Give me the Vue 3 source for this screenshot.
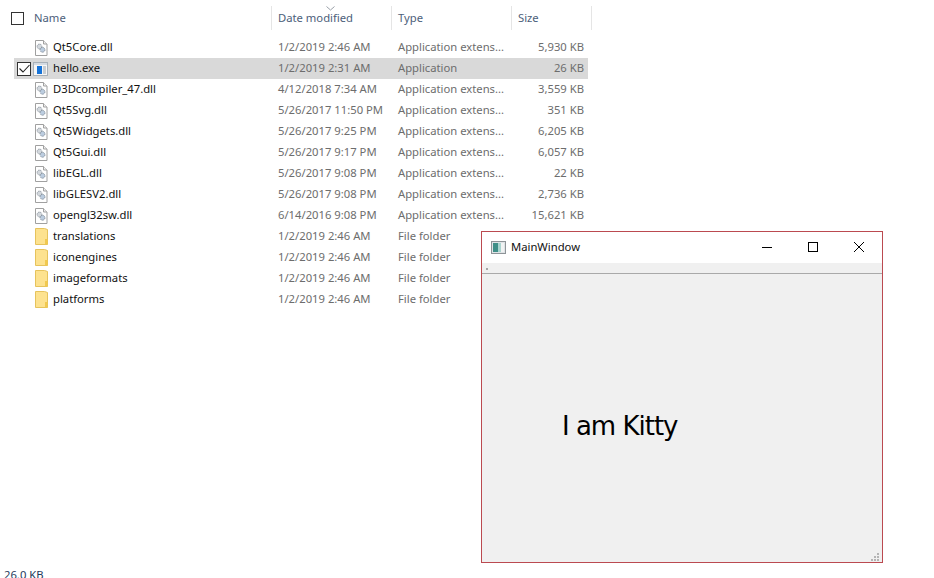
<script setup>
const files = [
  { name: 'Qt5Core.dll', date: '1/2/2019 2:46 AM', type: 'Application extens...', size: '5,930 KB', kind: 'dll' },
  { name: 'hello.exe', date: '1/2/2019 2:31 AM', type: 'Application', size: '26 KB', kind: 'exe', selected: true },
  { name: 'D3Dcompiler_47.dll', date: '4/12/2018 7:34 AM', type: 'Application extens...', size: '3,559 KB', kind: 'dll' },
  { name: 'Qt5Svg.dll', date: '5/26/2017 11:50 PM', type: 'Application extens...', size: '351 KB', kind: 'dll' },
  { name: 'Qt5Widgets.dll', date: '5/26/2017 9:25 PM', type: 'Application extens...', size: '6,205 KB', kind: 'dll' },
  { name: 'Qt5Gui.dll', date: '5/26/2017 9:17 PM', type: 'Application extens...', size: '6,057 KB', kind: 'dll' },
  { name: 'libEGL.dll', date: '5/26/2017 9:08 PM', type: 'Application extens...', size: '22 KB', kind: 'dll' },
  { name: 'libGLESV2.dll', date: '5/26/2017 9:08 PM', type: 'Application extens...', size: '2,736 KB', kind: 'dll' },
  { name: 'opengl32sw.dll', date: '6/14/2016 9:08 PM', type: 'Application extens...', size: '15,621 KB', kind: 'dll' },
  { name: 'translations', date: '1/2/2019 2:46 AM', type: 'File folder', size: '', kind: 'folder' },
  { name: 'iconengines', date: '1/2/2019 2:46 AM', type: 'File folder', size: '', kind: 'folder' },
  { name: 'imageformats', date: '1/2/2019 2:46 AM', type: 'File folder', size: '', kind: 'folder' },
  { name: 'platforms', date: '1/2/2019 2:46 AM', type: 'File folder', size: '', kind: 'folder' },
]
</script>

<template>
  <div class="screen">
    <main class="explorer">
      <header class="head">
        <div class="head-name">
          <span class="box"></span>
          <span class="head-label">Name</span>
        </div>
        <div class="head-cell date-head">
          <svg class="sort" width="9" height="5" viewBox="0 0 9 5"><path d="M.5.5 4.5 4 8.5.5" fill="none" stroke="#9aa0a8" /></svg>
          <span class="head-label">Date modified</span>
        </div>
        <div class="head-cell"><span class="head-label">Type</span></div>
        <div class="head-cell"><span class="head-label">Size</span></div>
      </header>

      <section class="list">
        <div v-for="f in files" :key="f.name" class="row" :class="{ selected: f.selected }">
          <div class="name-cell">
            <span class="slot">
              <span v-if="f.selected" class="box row-box">
                <svg width="11" height="9" viewBox="0 0 11 9"><path d="M.5 4.5 4 8 10.5 1" fill="none" stroke="#222" stroke-width="1.1" /></svg>
              </span>
            </span>
            <svg v-if="f.kind === 'dll'" class="icon" width="14" height="16" viewBox="0 0 14 16">
              <path d="M.5.5h8l3.5 3.5v11.5H.5z" fill="#fff" stroke="#a0a0a0" />
              <path d="M8.5.5v3.5h3.5" fill="#eee" stroke="#a0a0a0" />
              <circle cx="4.5" cy="6.5" r="2.4" fill="#d3d8dd" stroke="#8f98a2" stroke-dasharray="1.4 .8" />
              <circle cx="7.5" cy="9.8" r="2.4" fill="#bccde0" stroke="#7f8b98" stroke-dasharray="1.4 .8" />
            </svg>
            <svg v-else-if="f.kind === 'exe'" class="icon" width="15" height="14" viewBox="0 0 15 14">
              <rect x=".5" y=".5" width="14" height="13" fill="#f6f6f6" stroke="#a8b0b8" />
              <rect x="1" y="1" width="13" height="2" fill="#d5dbe2" />
              <rect x="4" y="4" width="5" height="8" fill="#1673d8" />
              <path d="M10 5h3M10 7h3M10 9h3M10 11h3" stroke="#9aa4ae" />
            </svg>
            <svg v-else class="icon folder" width="14" height="17" viewBox="0 0 14 17">
              <path d="M.5.5h9l3 1v15H.5z" fill="#fde28f" stroke="#e6c35c" />
              <path d="M10 11h2.5v5.5H10z" fill="#f1c94f" />
            </svg>
            <span class="file-name">{{ f.name }}</span>
          </div>
          <div class="cell">{{ f.date }}</div>
          <div class="cell">{{ f.type }}</div>
          <div class="cell size">{{ f.size }}</div>
        </div>
      </section>
    </main>

    <footer class="status">26.0 KB</footer>

    <div class="window">
      <div class="titlebar">
        <svg class="app-icon" width="15" height="13" viewBox="0 0 15 13">
          <rect x=".5" y=".5" width="14" height="12" fill="#dfe3e6" stroke="#8e9498" />
          <rect x="2" y="2" width="5" height="9" fill="#3f8f88" />
          <rect x="7" y="2" width="3" height="9" fill="#a9d4cf" />
          <rect x="10" y="2" width="3" height="9" fill="#f1f3f3" />
        </svg>
        <span class="title">MainWindow</span>
        <div class="controls">
          <svg width="46" height="30" viewBox="0 0 46 30"><path d="M18 15.5h10" stroke="#000" /></svg>
          <svg width="46" height="30" viewBox="0 0 46 30"><rect x="18.5" y="10.5" width="9" height="9" fill="none" stroke="#000" /></svg>
          <svg width="46" height="30" viewBox="0 0 46 30"><path d="M18 10l10 10M28 10 18 20" fill="none" stroke="#000" /></svg>
        </div>
      </div>
      <div class="menubar"><span class="dot"></span></div>
      <div class="client">
        <p class="kitty">I am Kitty</p>
        <svg class="grip" width="9" height="9" viewBox="0 0 9 9" fill="#b4b4b4">
          <rect x="6" y="0" width="2" height="2" />
          <rect x="3" y="3" width="2" height="2" />
          <rect x="6" y="3" width="2" height="2" />
          <rect x="0" y="6" width="2" height="2" />
          <rect x="3" y="6" width="2" height="2" />
          <rect x="6" y="6" width="2" height="2" />
        </svg>
      </div>
    </div>
  </div>
</template>

<style scoped>
.screen {
  position: relative;
  width: 934px;
  height: 578px;
  overflow: hidden;
  background: #fff;
  display: flex;
  flex-direction: column;
  font-family: "Noto Sans", "Open Sans", sans-serif;
  font-size: 11.25px;
}
.explorer {
  flex: 1;
  min-height: 0;
}
.head {
  display: grid;
  grid-template-columns: 272px 120px 120px 80px;
  width: 592px;
  height: 24px;
  margin-top: 6px;
  margin-bottom: 7px;
  color: #4c607a;
}
.head-name {
  display: flex;
  align-items: center;
  padding-left: 11px;
  gap: 10px;
  border-right: 1px solid #e5e5e5;
  height: 24px;
}
.head-cell {
  position: relative;
  display: flex;
  align-items: center;
  padding-left: 6px;
  border-right: 1px solid #e5e5e5;
  height: 24px;
}
.head-label {
  padding-bottom: 2px;
}
.sort {
  position: absolute;
  left: 54px;
  top: 0;
}
.box {
  display: inline-flex;
  align-items: center;
  justify-content: center;
  width: 13px;
  height: 13px;
  border: 1px solid #333;
  box-sizing: border-box;
  background: #fff;
}
.list {
  margin-left: 14px;
  width: 574px;
}
.row {
  display: grid;
  grid-template-columns: 257px 120px 120px 77px;
  height: 21px;
  align-items: center;
  color: #6d6d6d;
}
.selected {
  background: #d9d9d9;
}
.name-cell {
  display: flex;
  align-items: center;
  color: #111;
  height: 21px;
}
.slot {
  width: 19px;
  flex: none;
  display: flex;
  justify-content: flex-end;
}
.row-box {
  width: 14px;
  height: 14px;
  margin-right: 2px;
}
.icon {
  flex: none;
  margin-left: 2px;
}
.selected .icon {
  margin-left: 0;
}
.file-name {
  margin-left: 4px;
  padding-bottom: 2px;
  white-space: nowrap;
}
.selected .file-name {
  margin-left: 5px;
}
.cell {
  padding-left: 7px;
  padding-bottom: 2px;
  white-space: nowrap;
}
.size {
  padding: 0 4px 2px 0;
  text-align: right;
}
.status {
  height: 11px;
  padding-left: 4px;
  line-height: 15px;
  color: #1e395b;
  flex: none;
}
.window {
  position: absolute;
  left: 481px;
  top: 231px;
  width: 402px;
  height: 332px;
  box-sizing: border-box;
  border: 1px solid #bb4a50;
  background: #f0f0f0;
  display: flex;
  flex-direction: column;
}
.titlebar {
  flex: none;
  height: 31px;
  background: #fff;
  display: flex;
  align-items: center;
  padding-left: 9px;
  padding-bottom: 1px;
  box-sizing: border-box;
  color: #111;
}
.app-icon {
  flex: none;
}
.title {
  margin-left: 5px;
  padding-bottom: 2px;
}
.controls {
  margin-left: auto;
  display: flex;
}
.menubar {
  flex: none;
  height: 10px;
  border-bottom: 1px solid #a9a9a9;
  position: relative;
}
.dot {
  position: absolute;
  left: 4px;
  top: 5px;
  width: 2px;
  height: 2px;
  background: #a5a5a5;
}
.client {
  flex: 1;
  position: relative;
}
.kitty {
  margin: 135px 0 0 80px;
  font-family: "DejaVu Sans", sans-serif;
  font-size: 26px;
  line-height: 34px;
  letter-spacing: -1px;
  color: #000;
}
.grip {
  position: absolute;
  right: 2px;
  bottom: 0;
}
</style>
